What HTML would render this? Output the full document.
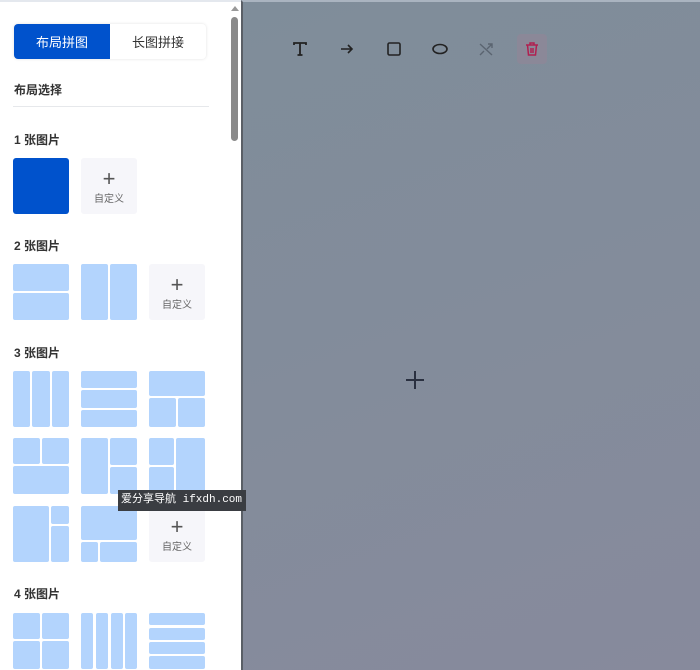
<!DOCTYPE html>
<html><head><meta charset="utf-8"><style>
*{margin:0;padding:0;box-sizing:border-box}
body{width:700px;height:670px;overflow:hidden;position:relative;font-family:"Liberation Sans","Noto Sans CJK SC",sans-serif;background:#fff}
#side{position:absolute;left:0;top:0;width:241px;height:670px;background:#fff;box-shadow:inset 0 2px 0 #e4e8ee}
#main{position:absolute;left:241px;top:0;width:459px;height:670px;border-left:2px solid #5a5f66;border-top:2px solid #aab4c0;background:linear-gradient(160deg,#7f8d9a 0%,#838c9b 50%,#878a9c 100%)}
.tabs{position:absolute;left:14px;top:24px;width:192px;height:35px;border-radius:4px;box-shadow:0 0 3px rgba(0,0,0,.12);display:flex;font-size:13px}
.tabs div{flex:1;display:flex;align-items:center;justify-content:center}
.tabs .a{background:#0052cc;color:#fff;border-radius:4px 0 0 4px}
.tabs .b{color:#333}
.h{position:absolute;left:14px;font-size:12px;font-weight:bold;color:#333}
.t{position:absolute;width:56px;height:56px}
.t i{position:absolute;background:#b3d4fd;border-radius:2px}
.c{position:absolute;width:56px;height:56px;background:#f6f6fa;border-radius:3px;text-align:center;color:#666;font-size:10px}
.c b{display:block;font-size:22px;font-weight:normal;line-height:22px;margin-top:10px;color:#555}
.tool{position:absolute;top:32px;width:30px;height:30px;display:flex;align-items:center;justify-content:center}
</style></head><body>
<div id="side">
<div class="tabs"><div class="a">布局拼图</div><div class="b">长图拼接</div></div>
<div class="h" style="top:81px">布局选择</div>
<div style="position:absolute;left:13px;top:106px;width:196px;height:1px;background:#e6e8eb"></div>
<div class="h" style="top:131px">1 张图片</div>
<div class="t" style="left:13px;top:158px;background:#0052cc;border-radius:3px"></div>
<div class="c" style="left:81px;top:158px"><b>+</b>自定义</div>
<div class="h" style="top:237px">2 张图片</div>
<div class="t" style="left:13px;top:264px"><i style="left:0;top:0;width:56px;height:27px"></i><i style="left:0;top:29px;width:56px;height:27px"></i></div>
<div class="t" style="left:81px;top:264px"><i style="left:0;top:0;width:27px;height:56px"></i><i style="left:29px;top:0;width:27px;height:56px"></i></div>
<div class="c" style="left:149px;top:264px"><b>+</b>自定义</div>
<div class="h" style="top:344px">3 张图片</div>
<div class="t" style="left:13px;top:371px"><i style="left:0;top:0;width:17px;height:56px"></i><i style="left:19px;top:0;width:18px;height:56px"></i><i style="left:39px;top:0;width:17px;height:56px"></i></div>
<div class="t" style="left:81px;top:371px"><i style="left:0;top:0;width:56px;height:17px"></i><i style="left:0;top:19px;width:56px;height:18px"></i><i style="left:0;top:39px;width:56px;height:17px"></i></div>
<div class="t" style="left:149px;top:371px"><i style="left:0;top:0;width:56px;height:25px"></i><i style="left:0;top:27px;width:27px;height:29px"></i><i style="left:29px;top:27px;width:27px;height:29px"></i></div>
<div class="t" style="left:13px;top:438px"><i style="left:0;top:0;width:27px;height:26px"></i><i style="left:29px;top:0;width:27px;height:26px"></i><i style="left:0;top:28px;width:56px;height:28px"></i></div>
<div class="t" style="left:81px;top:438px"><i style="left:0;top:0;width:27px;height:56px"></i><i style="left:29px;top:0;width:27px;height:27px"></i><i style="left:29px;top:29px;width:27px;height:27px"></i></div>
<div class="t" style="left:149px;top:438px"><i style="left:0;top:0;width:25px;height:27px"></i><i style="left:0;top:29px;width:25px;height:27px"></i><i style="left:27px;top:0;width:29px;height:56px"></i></div>
<div class="t" style="left:13px;top:506px"><i style="left:0;top:0;width:36px;height:56px"></i><i style="left:38px;top:0;width:18px;height:18px"></i><i style="left:38px;top:20px;width:18px;height:36px"></i></div>
<div class="t" style="left:81px;top:506px"><i style="left:0;top:0;width:56px;height:34px"></i><i style="left:0;top:36px;width:17px;height:20px"></i><i style="left:19px;top:36px;width:37px;height:20px"></i></div>
<div class="c" style="left:149px;top:506px"><b>+</b>自定义</div>
<div class="h" style="top:585px">4 张图片</div>
<div class="t" style="left:13px;top:613px"><i style="left:0;top:0;width:27px;height:26px"></i><i style="left:29px;top:0;width:27px;height:26px"></i><i style="left:0;top:28px;width:27px;height:28px"></i><i style="left:29px;top:28px;width:27px;height:28px"></i></div>
<div class="t" style="left:81px;top:613px"><i style="left:0;top:0;width:12px;height:56px"></i><i style="left:15px;top:0;width:12px;height:56px"></i><i style="left:30px;top:0;width:12px;height:56px"></i><i style="left:44px;top:0;width:12px;height:56px"></i></div>
<div class="t" style="left:149px;top:613px"><i style="left:0;top:0;width:56px;height:12px"></i><i style="left:0;top:15px;width:56px;height:12px"></i><i style="left:0;top:29px;width:56px;height:12px"></i><i style="left:0;top:43px;width:56px;height:13px"></i></div>
<div style="position:absolute;left:231px;top:6px;width:0;height:0;border-left:4px solid transparent;border-right:4px solid transparent;border-bottom:5px solid #999"></div>
<div style="position:absolute;left:231px;top:17px;width:7px;height:124px;background:#8a8a8a;border-radius:4px"></div>
</div>
<div id="main">
<div class="tool" style="left:42px"><svg width="16" height="16" viewBox="0 0 16 16"><path d="M2 4V2h12v2M8 2v12M5.5 14h5" stroke="#222" stroke-width="1.8" fill="none"/></svg></div>
<div class="tool" style="left:89px"><svg width="16" height="16" viewBox="0 0 16 16"><path d="M2 8h11M9 4l4 4-4 4" stroke="#222" stroke-width="1.6" fill="none"/></svg></div>
<div class="tool" style="left:136px"><svg width="16" height="16" viewBox="0 0 16 16"><rect x="2" y="2" width="12" height="12" rx="1.5" stroke="#222" stroke-width="1.6" fill="none"/></svg></div>
<div class="tool" style="left:182px"><svg width="18" height="16" viewBox="0 0 18 16"><ellipse cx="9" cy="8" rx="7" ry="4.5" stroke="#222" stroke-width="1.6" fill="none"/></svg></div>
<div class="tool" style="left:228px"><svg width="16" height="16" viewBox="0 0 16 16"><path d="M2 3l12 11M10 3h4v4M14 3L9 8M2 14l4-4" stroke="#5a6470" stroke-width="1.4" fill="none"/></svg></div>
<div class="tool" style="left:274px;background:rgba(200,110,140,.15);border-radius:4px"><svg width="16" height="16" viewBox="0 0 16 16"><path d="M2 4h12M6 4V2h4v2M3.5 4l1 10h7l1-10M7 7v5M9 7v5" stroke="#b02050" stroke-width="1.5" fill="none"/></svg></div>
<div style="position:absolute;left:163px;top:377px;width:18px;height:2px;background:#2a3040"></div>
<div style="position:absolute;left:171px;top:369px;width:2px;height:18px;background:#2a3040"></div>
</div>
<div style="position:absolute;left:118px;top:490px;width:128px;height:21px;background:#3a3d42;color:#fff;font-size:11px;line-height:21px;padding-left:3px;font-family:'Liberation Mono','Noto Sans CJK SC',monospace;white-space:nowrap;overflow:hidden">爱分享导航 ifxdh.com</div>
</body></html>
